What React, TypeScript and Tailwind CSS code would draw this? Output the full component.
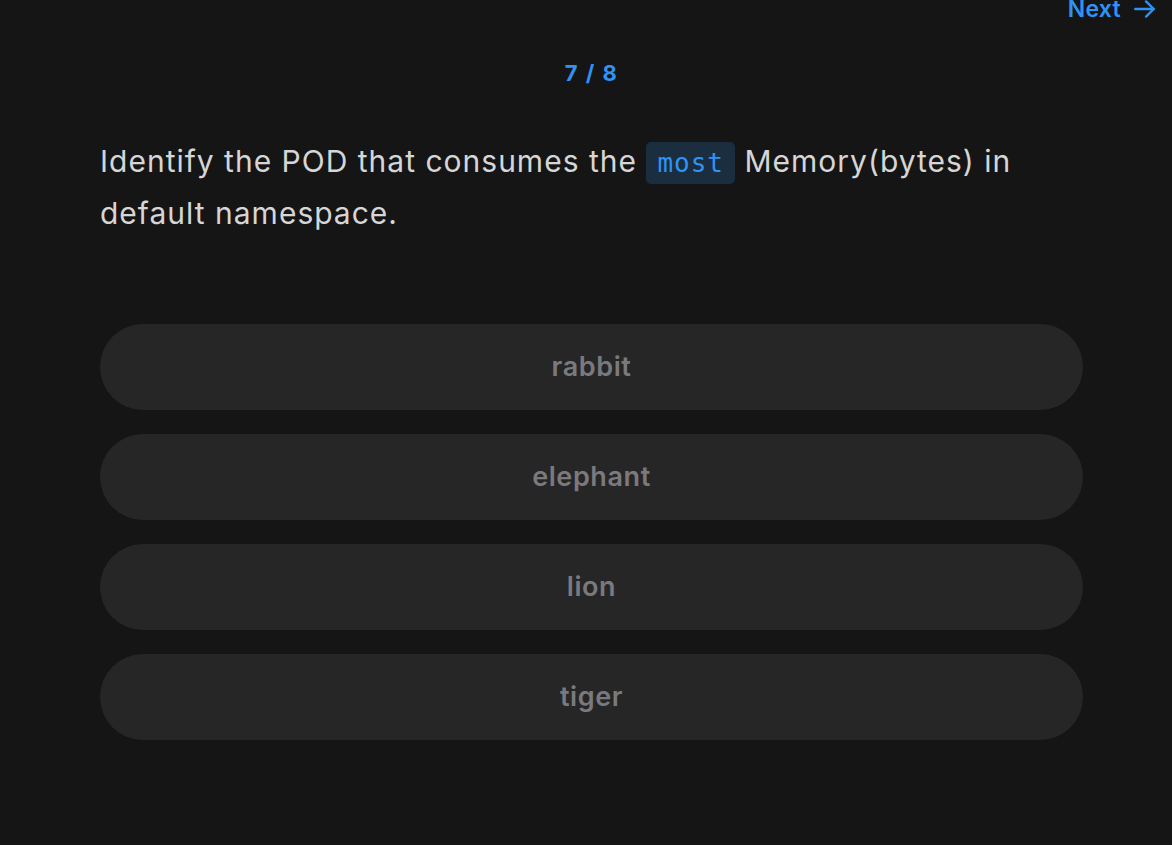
import React from "react";

const options = ["rabbit", "elephant", "lion", "tiger"];

export default function App() {
  return (
    <div
      className="min-h-[852px] bg-[#151515] text-[#d6d6d6]"
      style={{ fontFamily: "Inter, 'Noto Sans', sans-serif" }}
    >
      {/* Next link, partly cut off at the top */}
      <div className="flex justify-end pr-[14px] -mt-[7px] h-[32px]">
        <button className="flex items-center gap-[11px] text-[23px] font-semibold tracking-[0.3px] text-[#2f93f5]">
          Next
          <svg width="26" height="26" viewBox="0 0 24 24" fill="none" stroke="currentColor" strokeWidth="2.2" strokeLinecap="round" strokeLinejoin="round">
            <path d="M3 12h17" />
            <path d="M13 5l7 7-7 7" />
          </svg>
        </button>
      </div>

      <div className="ml-[100px] w-[983px]">
        <div className="mt-[32px] text-center text-[22px] font-bold tracking-[1.5px] text-[#2f93f5]">7 / 8</div>

        <p className="mt-[46px] text-[30px] leading-[50px] tracking-[1px] text-[#d6d6d6]">
          Identify the POD that consumes the{" "}
          <code
            className="rounded-[5px] bg-[#1b2e40] px-[11px] py-[6px] text-[26px] tracking-[1px] text-[#2f93f5]"
            style={{ fontFamily: "'DejaVu Sans Mono', 'Liberation Mono', monospace" }}
          >
            most
          </code>{" "}
          Memory(bytes) in default namespace.
        </p>

        <div className="mt-[86px] flex flex-col gap-[24px]">
          {options.map((o) => (
            <button
              key={o}
              className="h-[86px] w-full rounded-full bg-[#262626] text-[27px] font-semibold tracking-[0.6px] text-[#7a7a7e]"
            >
              {o}
            </button>
          ))}
        </div>
      </div>
    </div>
  );
}
